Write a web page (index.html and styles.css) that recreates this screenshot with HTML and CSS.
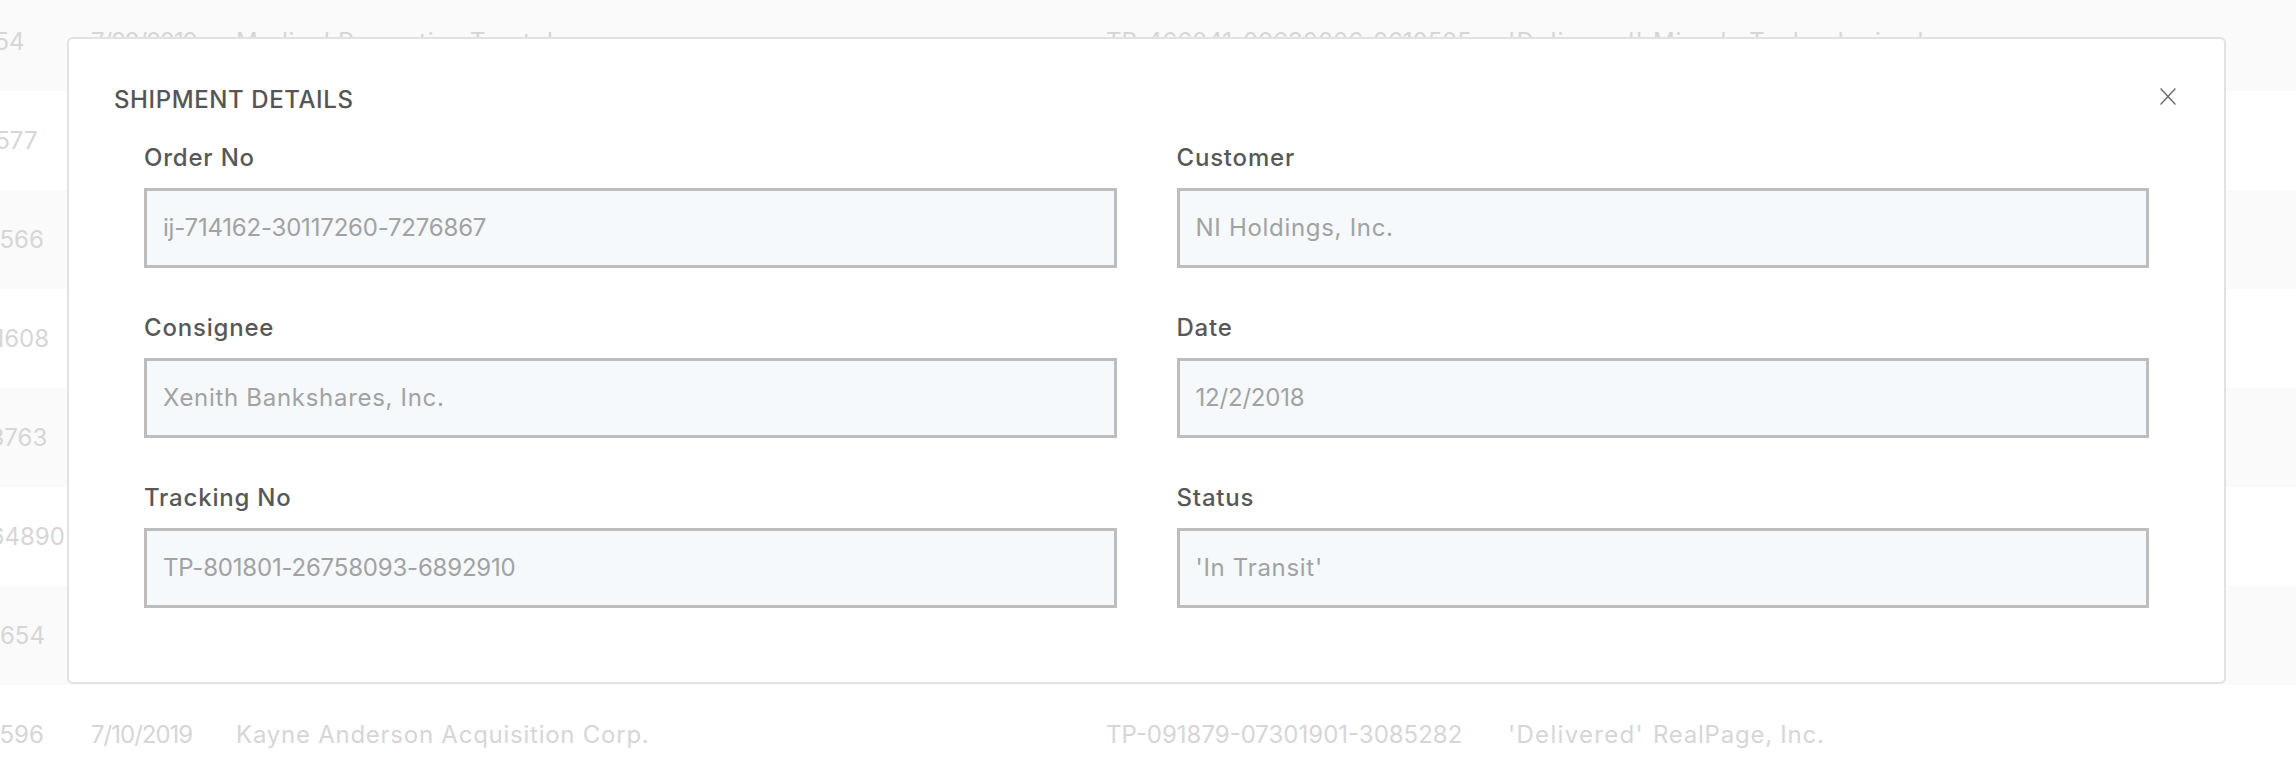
FILE: index.html
```html
<!DOCTYPE html>
<html lang="en">
<head>
<meta charset="utf-8">
<title>Shipment Details</title>
<link rel="stylesheet" href="styles.css">
</head>
<body>
<div class="table">
  <div class="row">
    <span class="cell id">1254</span><span class="cell date">7/22/2019</span><span class="cell name">Medical Properties Trust, Inc.</span><span class="cell track">TP-466041-09630006-2610525</span><span class="cell status">'Delivered'</span><span class="cell name">Miracle Technologies Inc.</span>
  </div>
  <div class="row">
    <span class="cell id">14577</span><span class="cell date">3/14/2019</span><span class="cell name">Blue Apron Holdings, Inc.</span><span class="cell track">TP-318204-55120934-1198327</span><span class="cell status">'Delivered'</span><span class="cell name">Comerica Incorporated</span>
  </div>
  <div class="row">
    <span class="cell id">32566</span><span class="cell date">1/8/2019</span><span class="cell name">Pacific Mercantile Bancorp</span><span class="cell track">TP-702118-43019876-5541208</span><span class="cell status">'Shipped'</span><span class="cell name">Arrow Electronics, Inc.</span>
  </div>
  <div class="row">
    <span class="cell id">211608</span><span class="cell date">9/27/2018</span><span class="cell name">Xenith Bankshares, Inc.</span><span class="cell track">TP-801801-26758093-6892910</span><span class="cell status">'In Transit'</span><span class="cell name">NI Holdings, Inc.</span>
  </div>
  <div class="row">
    <span class="cell id">113763</span><span class="cell date">5/19/2019</span><span class="cell name">Globus Medical, Inc.</span><span class="cell track">TP-512660-80347712-2094416</span><span class="cell status">'Delivered'</span><span class="cell name">Hudson Global, Inc.</span>
  </div>
  <div class="row">
    <span class="cell id">1164890</span><span class="cell date">11/3/2018</span><span class="cell name">Verisk Analytics, Inc.</span><span class="cell track">TP-946013-11825540-7730159</span><span class="cell status">'Shipped'</span><span class="cell name">Myers Industries, Inc.</span>
  </div>
  <div class="row">
    <span class="cell id">30654</span><span class="cell date">2/21/2019</span><span class="cell name">Trinity Place Holdings Inc.</span><span class="cell track">TP-237745-61093288-4401973</span><span class="cell status">'Delivered'</span><span class="cell name">Kewaunee Scientific Corp.</span>
  </div>
  <div class="row">
    <span class="cell id">23596</span><span class="cell date">7/10/2019</span><span class="cell name">Kayne Anderson Acquisition Corp.</span><span class="cell track">TP-091879-07301901-3085282</span><span class="cell status">'Delivered'</span><span class="cell name">RealPage, Inc.</span>
  </div>
</div>

<div class="modal" role="dialog" aria-labelledby="modal-title">
  <div class="modal-header">
    <h2 class="modal-title" id="modal-title">SHIPMENT DETAILS</h2>
    <button class="close-btn" type="button" aria-label="Close">
      <svg width="16" height="17" viewBox="0 0 16 17" aria-hidden="true">
        <path d="M0.6 0.6 L15.4 16.4 M15.4 0.6 L0.6 16.4" stroke="#6a6a6a" stroke-width="1.4" fill="none"/>
      </svg>
    </button>
  </div>
  <div class="form">
    <div class="field">
      <div class="label">Order No</div>
      <div class="box num">ij-714162-30117260-7276867</div>
    </div>
    <div class="field">
      <div class="label">Customer</div>
      <div class="box">NI Holdings, Inc.</div>
    </div>
    <div class="field">
      <div class="label">Consignee</div>
      <div class="box">Xenith Bankshares, Inc.</div>
    </div>
    <div class="field">
      <div class="label">Date</div>
      <div class="box num">12/2/2018</div>
    </div>
    <div class="field">
      <div class="label">Tracking No</div>
      <div class="box num">TP-801801-26758093-6892910</div>
    </div>
    <div class="field">
      <div class="label">Status</div>
      <div class="box">'In Transit'</div>
    </div>
  </div>
</div>
</body>
</html>
```
FILE: styles.css
```css
* {
  box-sizing: border-box;
}

html, body {
  margin: 0;
  padding: 0;
  background: #ffffff;
  overflow: hidden;
}

body {
  font-family: Inter, "Open Sans", "Liberation Sans", sans-serif;
  font-size: 24px;
  line-height: 30px;
}

/* background table */
.table {
  margin-top: -8px;
  margin-left: -30px;
}

.row {
  display: grid;
  grid-template-columns: 121px 145px 870px 402px 145px 1fr;
  align-items: center;
  height: 99px;
  color: #d6d6d6;
  white-space: nowrap;
}

.row:nth-child(odd) {
  background: #fafafa;
}

.cell.date {
  letter-spacing: -1px;
}

.cell.name {
  letter-spacing: 0.75px;
}

.cell.status {
  letter-spacing: 1.3px;
}

/* modal */
.modal {
  position: fixed;
  top: 37px;
  left: 67px;
  width: 2159px;
  background: #ffffff;
  border: 2px solid #e2e2e2;
  border-radius: 6px;
  padding-top: 46px;
}

.modal-header {
  display: flex;
  justify-content: space-between;
  align-items: flex-start;
  padding: 0 48px 0 45px;
}

.modal-title {
  margin: 0;
  font-size: 24px;
  line-height: 30px;
  font-weight: 500;
  letter-spacing: 0.6px;
  color: #555555;
}

.close-btn {
  margin: 3px 0 0 0;
  padding: 0;
  border: 0;
  background: none;
  width: 16px;
  height: 17px;
  display: block;
  cursor: pointer;
}

.close-btn svg {
  display: block;
}

.form {
  display: grid;
  grid-template-columns: 1fr 1fr;
  column-gap: 60px;
  row-gap: 45px;
  padding: 28px 75px 74px;
}

.label {
  color: #585858;
  font-weight: 500;
  letter-spacing: 0.8px;
  line-height: 30px;
  margin-bottom: 15px;
}

.box {
  height: 80px;
  display: flex;
  align-items: center;
  padding: 0 16px;
  border: 3px solid #bdbdbd;
  background: #f5f9fc;
  color: #a2a2a2;
  letter-spacing: 0.7px;
  white-space: nowrap;
}

.box.num {
  letter-spacing: -0.2px;
}
```
